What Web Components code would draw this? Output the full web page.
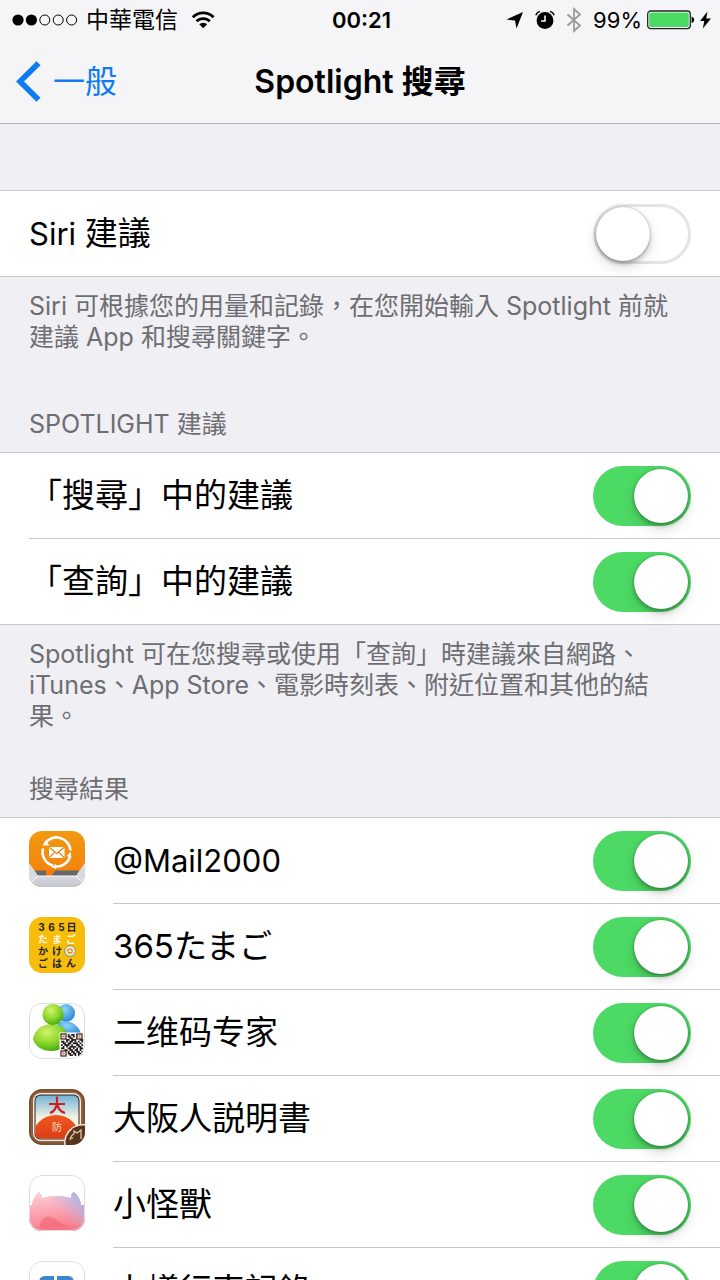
<!DOCTYPE html>
<html lang="zh-Hant">
<head>
<meta charset="utf-8">
<meta name="viewport" content="width=device-width, initial-scale=1">
<title>Spotlight 搜尋</title>
<style>
  body {
    margin: 0;
    background: #efeff4;
    color: #000;
    font-family: Inter, "Noto Sans CJK TC", sans-serif;
    text-spacing-trim: space-all;
    --line: #c8c7cc;
    --muted: #6d6d72;
    --blue: #0f7bf2;
    --green: #4cd964;
  }
  .latin { font-size: 31px; }
</style>
</head>
<body>

<status-bar carrier="中華電信" time="00:21" battery="99%"></status-bar>
<nav-bar back="一般">Spotlight 搜尋</nav-bar>

<settings-page>
  <settings-group class="roomy">
    <settings-row><span class="latin">Siri </span>建議</settings-row>
    <span slot="footer">Siri 可根據您的用量和記錄，在您開始輸入 Spotlight 前就建議 App 和搜尋關鍵字。</span>
  </settings-group>

  <settings-group>
    <span slot="header">SPOTLIGHT 建議</span>
    <settings-row on>「搜尋」中的建議</settings-row>
    <settings-row on>「查詢」中的建議</settings-row>
    <span slot="footer">Spotlight 可在您搜尋或使用「查詢」時建議來自網路、iTunes、App Store、電影時刻表、附近位置和其他的結果。</span>
  </settings-group>

  <settings-group>
    <span slot="header">搜尋結果</span>
    <settings-row on><app-icon slot="icon" name="mail"></app-icon><span class="latin">@Mail2000</span></settings-row>
    <settings-row on><app-icon slot="icon" name="egg"></app-icon><span lang="ja">365たまご</span></settings-row>
    <settings-row on><app-icon slot="icon" name="qr"></app-icon><span lang="zh-Hans">二维码专家</span></settings-row>
    <settings-row on><app-icon slot="icon" name="osaka"></app-icon><span lang="ja">大阪人説明書</span></settings-row>
    <settings-row on><app-icon slot="icon" name="monster"></app-icon>小怪獸</settings-row>
    <settings-row on><app-icon slot="icon" name="dashcam"></app-icon>小蟻行車記錄</settings-row>
  </settings-group>
</settings-page>

<script>
function mount(host, html) {
  const t = document.createElement('template');
  t.innerHTML = html;
  host.attachShadow({ mode: 'open' }).appendChild(t.content.cloneNode(true));
}

customElements.define('status-bar', class extends HTMLElement {
  constructor() {
    super();
    mount(this, `
      <style>
        :host { display: grid; grid-template-columns: 1fr auto 1fr; align-items: center; height: 40px;
          padding: 0 9px 0 12px; background: #f5f5f7; font-size: 22px; line-height: 28px; }
        svg { display: block; flex: none; }
        .side { display: flex; align-items: center; }
        .left { gap: 8px; }
        .carrier { font-size: 23px; margin-right: 4px; }
        .time { font-weight: 600; }
        .right { justify-content: flex-end; gap: 11px; }
        .power { display: flex; align-items: center; gap: 5px; }
      </style>
      <div class="side left">
        <svg width="66" height="12" viewBox="0 0 66 12" aria-hidden="true">
          <circle cx="6" cy="6" r="5.6"/><circle cx="19.4" cy="6" r="5.6"/>
          <g fill="none" stroke="#000"><circle cx="32.8" cy="6" r="5"/><circle cx="46.2" cy="6" r="5"/><circle cx="59.6" cy="6" r="5"/></g>
        </svg>
        <span class="carrier"></span>
        <svg width="26" height="18" viewBox="1 0 26 18" aria-hidden="true">
          <g fill="none" stroke="#000" stroke-width="2.8">
            <path d="M3.8 6.2a14.5 14.5 0 0 1 20.8 0"/><path d="M7.6 10.3a9.3 9.3 0 0 1 13.2 0"/>
          </g>
          <path d="M10.2 13.3a5.7 5.7 0 0 1 8 0L14.2 17.3z"/>
        </svg>
      </div>
      <span class="time"></span>
      <div class="side right">
        <svg width="18" height="18" viewBox="0 0 18 18" aria-hidden="true"><path d="M17 1L10.5 17.5 9 9.5 0.5 8.5z"/></svg>
        <svg width="20" height="20" viewBox="0 0 20 20" aria-hidden="true">
          <circle cx="10" cy="10.5" r="8.4"/>
          <path d="M10 5.5V11H6" fill="none" stroke="#f5f5f7" stroke-width="1.6"/>
          <path d="M0.8 5.2Q1.8 2.3 5 1.4M19.2 5.2Q18.2 2.3 15 1.4" fill="none" stroke="#000" stroke-width="1.5"/>
        </svg>
        <svg width="16" height="26" viewBox="0 0 16 26" aria-hidden="true"><path d="M1.5 7.5L14 18.5 8 24V2L14 7.5 1.5 18.5" fill="none" stroke="#9a9a9c" stroke-width="1.8"/></svg>
        <div class="power">
          <span class="pct"></span>
          <svg width="48" height="20" viewBox="0 0 48 20" aria-hidden="true">
            <rect x="0.7" y="1" width="42.6" height="17.6" rx="3" fill="#fff" stroke="#222" stroke-width="1.3"/>
            <rect x="2.2" y="2.5" width="39.6" height="14.6" rx="1.5" fill="#4cd964"/>
            <path d="M44.6 6.5q2.6 0.8 2.6 3.3t-2.6 3.3z"/>
          </svg>
          <svg width="11" height="18" viewBox="0 0 11 18" aria-hidden="true"><path d="M7.5 0.5L0 10h4.3L2.8 17.5 11 7.5H6.2z"/></svg>
        </div>
      </div>`);
  }
  connectedCallback() {
    const $ = s => this.shadowRoot.querySelector(s);
    $('.carrier').textContent = this.getAttribute('carrier');
    $('.time').textContent = this.getAttribute('time');
    $('.pct').textContent = this.getAttribute('battery');
  }
});

customElements.define('nav-bar', class extends HTMLElement {
  constructor() {
    super();
    mount(this, `
      <style>
        :host { display: grid; grid-template-columns: 1fr auto 1fr; align-items: center; height: 83px;
          padding: 0 16px; background: #f5f5f7; border-bottom: 1px solid #b2b2b6; }
        a { display: flex; align-items: center; gap: 12px; color: var(--blue); text-decoration: none; font-size: 32px; line-height: 40px; }
        svg { display: block; }
        h1 { margin: 0; font-size: 32px; line-height: 40px; font-weight: 600; }
      </style>
      <a href="#general">
        <svg width="25" height="41" viewBox="0 0 25 41" aria-hidden="true"><path d="M22.5 2.2L4 20.5 22.5 38.8" fill="none" stroke="currentColor" stroke-width="5.8"/></svg>
        <span></span>
      </a>
      <h1><slot></slot></h1>`);
  }
  connectedCallback() {
    this.shadowRoot.querySelector('span').textContent = this.getAttribute('back');
  }
});

customElements.define('settings-page', class extends HTMLElement {
  constructor() {
    super();
    mount(this, `
      <style>:host { display: block; padding-top: 66px; }</style>
      <main><slot></slot></main>`);
  }
});

customElements.define('settings-group', class extends HTMLElement {
  constructor() {
    super();
    mount(this, `
      <style>
        :host { display: block; --after: 42px; }
        :host(.roomy) { --after: 56px; }
        .note { color: var(--muted); font-size: 25px; line-height: 31px; font-weight: 400; margin: 0; }
        ::slotted(span) { display: block; }
        ::slotted([slot="header"]) { padding: 0 29px 12px; }
        ::slotted([slot="footer"]) { padding: 14px 29px var(--after); }
        .rows { background: #fff; border: solid var(--line); border-width: 1px 0; }
      </style>
      <h2 class="note"><slot name="header"></slot></h2>
      <div class="rows"><slot></slot></div>
      <p class="note"><slot name="footer"></slot></p>`);
  }
});

customElements.define('settings-row', class extends HTMLElement {
  constructor() {
    super();
    mount(this, `
      <style>
        :host { display: block; }
        label { display: flex; align-items: center; gap: 28px; padding-left: 29px; }
        .body { flex: 1; display: flex; align-items: center; justify-content: space-between; min-height: 85px;
          padding-right: 29px; border-bottom: 1px solid var(--line); }
        :host(:last-of-type) .body { border-bottom: 0; }
        .text { font-size: 33px; line-height: 40px; padding-bottom: 1px; }
        ::slotted(:lang(ja)) { font-family: Inter, "Noto Sans CJK JP", sans-serif; }
        ::slotted(:lang(zh-Hans)) { font-family: Inter, "Noto Sans CJK SC", sans-serif; }
        input { appearance: none; flex: none; margin: 0; padding: 3px; box-sizing: border-box; width: 98px; height: 60px;
          border-radius: 30px; background: #fff; box-shadow: inset 0 0 0 3px #e4e4e4; }
        input::before { content: ""; display: block; width: 54px; height: 54px; border-radius: 50%; background: #fff;
          box-shadow: 0 0 2px rgba(0,0,0,.35), 0 3px 4px rgba(0,0,0,.22), 0 6px 14px rgba(0,0,0,.14); }
        input:checked { background: var(--green); box-shadow: none; }
        input:checked::before { margin-left: 38px; }
      </style>
      <label>
        <slot name="icon"></slot>
        <span class="body"><span class="text"><slot></slot></span><input type="checkbox" role="switch"></span>
      </label>`);
  }
  connectedCallback() {
    this.shadowRoot.querySelector('input').checked = this.hasAttribute('on');
  }
});

const qrCells = (() => {
  const rows = ['1110101101110', '1010110101010', '1110011001110', '0001101110011', '1101011010101', '0110110111010',
    '1011101001101', '0101011110110', '1100110101011', '0011011011010', '1110101101101', '1010110110110', '1110011010101'];
  let d = '';
  rows.forEach((r, y) => [...r].forEach((c, x) => { if (c === '1') d += `M${32 + x * 1.7} ${31 + y * 1.7}h1.7v1.7h-1.7z`; }));
  return d;
})();

const kana = (text, y, fill) => [...text].map((c, i) =>
  `<text x="${14 + i * 14}" y="${y}" fill="${fill}">${c}</text>`).join('');

const art = {
  mail: `
    <defs><linearGradient id="g" x2="0" y2="1"><stop stop-color="#f09a10"/><stop offset="1" stop-color="#f67a0b"/></linearGradient>
    <linearGradient id="s" x2="0" y2="1"><stop stop-color="#f1f1f6"/><stop offset="1" stop-color="#c4c4ce"/></linearGradient></defs>
    <rect width="56" height="56" fill="url(#g)"/>
    <path d="M6 39.5h12v6H8zM26 39.5h24l-2 6H22z" fill="#66666c"/>
    <path d="M17 39h10l-6 6h-4z" fill="#f67a0b"/>
    <path d="M0 32l9 13h38l9-13v24H0z" fill="url(#s)"/>
    <path d="M0 32l9 13-9 9zM56 32l-9 13 9 9z" fill="#d9d9e1"/>
    <path d="M0 54l9-9h38l9 9" fill="none" stroke="#fafaff"/>
    <g fill="none" stroke="#fff" stroke-width="2.6"><path d="M16 12.5a14 14 0 0 1 25.500 7"/><path d="M41 26a14 14 0 0 1-14 9.5"/><path d="M24 34.5a14 14 0 0 1-10-17"/></g>
    <path d="M13.5 14.5l3-5 4 5zM42.5 27l-1-6-4 4zM22 36l5-3v5z" fill="#fff"/>
    <rect x="20" y="16" width="15.5" height="11" rx="1" fill="#fff"/>
    <path d="M20.5 16.5l7.3 6 7.2-6M20.5 26.5l5-5M35 26.5l-5-5" fill="none" stroke="#e8820c" stroke-width="1.1"/>`,
  egg: `
    <rect width="56" height="56" fill="#f7bd0b"/>
    <g font-family="Inter, Noto Sans CJK JP, sans-serif" font-weight="700" font-size="10" text-anchor="middle">
      ${[...'365日'].map((c, i) => `<text x="${12.5 + i * 10}" y="14" fill="#222">${c}</text>`).join('')}
      ${kana('たまご', 26, '#fffbe8')}${kana('かけ', 38, '#222')}${kana('ごはん', 50, '#222')}
    </g>
    <circle cx="41" cy="34" r="5.4" fill="#e9ecd2" stroke="#8b9560"/><circle cx="41" cy="34" r="2.8" fill="#e88b22"/><path d="M39 35l2-3 2 3z" fill="#fff4c0"/>`,
  qr: `
    <defs><radialGradient id="g" cx=".4" cy=".3" r=".8"><stop stop-color="#d3f26c"/><stop offset=".5" stop-color="#8fd82c"/><stop offset="1" stop-color="#2fa008"/></radialGradient>
    <radialGradient id="b" cx=".4" cy=".3" r=".8"><stop stop-color="#8fd5f7"/><stop offset="1" stop-color="#1c7fd0"/></radialGradient></defs>
    <rect width="56" height="56" fill="#fff"/>
    <circle cx="37" cy="10" r="9" fill="url(#b)"/><path d="M28 20q17-6 24 10l-3 3H30z" fill="url(#b)"/>
    <path d="M4 36Q7 22 22 21q15 0 17 14 0 12-16 13-15 0-19-12z" fill="url(#g)"/>
    <circle cx="24" cy="11.5" r="10.5" fill="url(#g)"/>
    <path d="M30.5 29.5H54V54H30.5z" fill="#fff"/>
    <path d="${qrCells}" fill="#241c1a"/>
    <g fill="#fff" stroke="#4a2c22" stroke-width="1.3"><rect x="32" y="31" width="5" height="5"/><rect x="48" y="31" width="5" height="5"/><rect x="32" y="48" width="5" height="5"/></g>
    <path d="M33.5 32.5h2v2h-2zM49.5 32.5h2v2h-2zM33.5 49.5h2v2h-2z" fill="#d0684a"/>`,
  osaka: `
    <defs><linearGradient id="g" x2="0" y2="1"><stop stop-color="#6fb0d8"/><stop offset=".5" stop-color="#f2f1e2"/></linearGradient>
    <linearGradient id="r" x2="0" y2="1"><stop stop-color="#f0581e"/><stop offset="1" stop-color="#c8200c"/></linearGradient>
    <clipPath id="c"><rect x="6.5" y="6.5" width="43" height="43" rx="5"/></clipPath></defs>
    <rect width="56" height="56" fill="#8d5f3e"/><rect x="1" y="1" width="54" height="54" rx="12" fill="none" stroke="#6a4329"/>
    <rect x="4" y="4" width="48" height="48" rx="8" fill="#f6efe2"/><rect x="5.5" y="5.5" width="45" height="45" rx="6" fill="#2f1c12"/>
    <g clip-path="url(#c)"><rect x="6" y="6" width="44" height="44" fill="url(#g)"/>
      <circle cx="27" cy="50" r="24" fill="url(#r)"/></g>
    <path d="M20 15h16M28 7.5V14q-1 8-7 10M28 14q1 8 8 10" fill="none" stroke="#cf1f22" stroke-width="2.2"/>
    <text x="28" y="42" text-anchor="middle" font-family="Noto Sans CJK JP, sans-serif" font-size="10" fill="#ffd9c0">防</text>
    <circle cx="54" cy="54" r="19" fill="#f1e3cd"/><circle cx="54" cy="54" r="17.5" fill="#55351f"/>
    <path d="M41 51q1-5 4-6l0-3 3 2 4-3v9" fill="none" stroke="#e3cba8" stroke-width="1.3"/><circle cx="43" cy="49" r="1" fill="#e9c94c"/>`,
  monster: `
    <defs><linearGradient id="g" gradientUnits="userSpaceOnUse" x1="22" y1="17" x2="28" y2="56"><stop stop-color="#fbcfd6"/><stop offset=".45" stop-color="#fba5b4"/><stop offset="1" stop-color="#f97986"/></linearGradient>
    <linearGradient id="b" gradientUnits="userSpaceOnUse" x1="34" y1="40" x2="54" y2="22"><stop stop-color="#b7b8e8" stop-opacity="0"/><stop offset="1" stop-color="#a6b4e6"/></linearGradient></defs>
    <rect width="56" height="56" fill="#fff"/>
    <path id="body" d="M0 30h3q1-8 7-13 3 2 3 6 15-4 29 0 0-5 3-6 6 5 7 13h4v26H0z" fill="url(#g)"/>
    <use href="#body" fill="none"/>
    <path d="M0 30h3q1-8 7-13 3 2 3 6 15-4 29 0 0-5 3-6 6 5 7 13h4v26H0z" fill="url(#b)"/>
    <path d="M12 46q6-8 14-2t18 9l-8 3H10z" fill="#f2566a" opacity=".45"/><path d="M0 51q28 3 56-3v8H0z" fill="#f57f90" opacity=".6"/>`,
  dashcam: `
    <rect width="56" height="56" fill="#fff"/>
    <path d="M25 17H16q-4 0-4 5v12M28 17h11q4 0 4 5v12M20 25h14" fill="none" stroke="#3b86cf" stroke-width="4"/>`
};

customElements.define('app-icon', class extends HTMLElement {
  connectedCallback() {
    const name = this.getAttribute('name');
    const edge = ['qr', 'monster', 'dashcam'].includes(name) ? '#dedee0' : 'none';
    mount(this, `
      <style>
        :host { display: block; flex: none; margin-bottom: 4px; }
        svg { display: block; border-radius: 13px; }
      </style>
      <svg width="56" height="56" viewBox="0 0 56 56" aria-hidden="true">${art[name]}
        <rect x="0.5" y="0.5" width="55" height="55" rx="12.5" fill="none" stroke="${edge}"/></svg>`);
  }
});
</script>
</body>
</html>
